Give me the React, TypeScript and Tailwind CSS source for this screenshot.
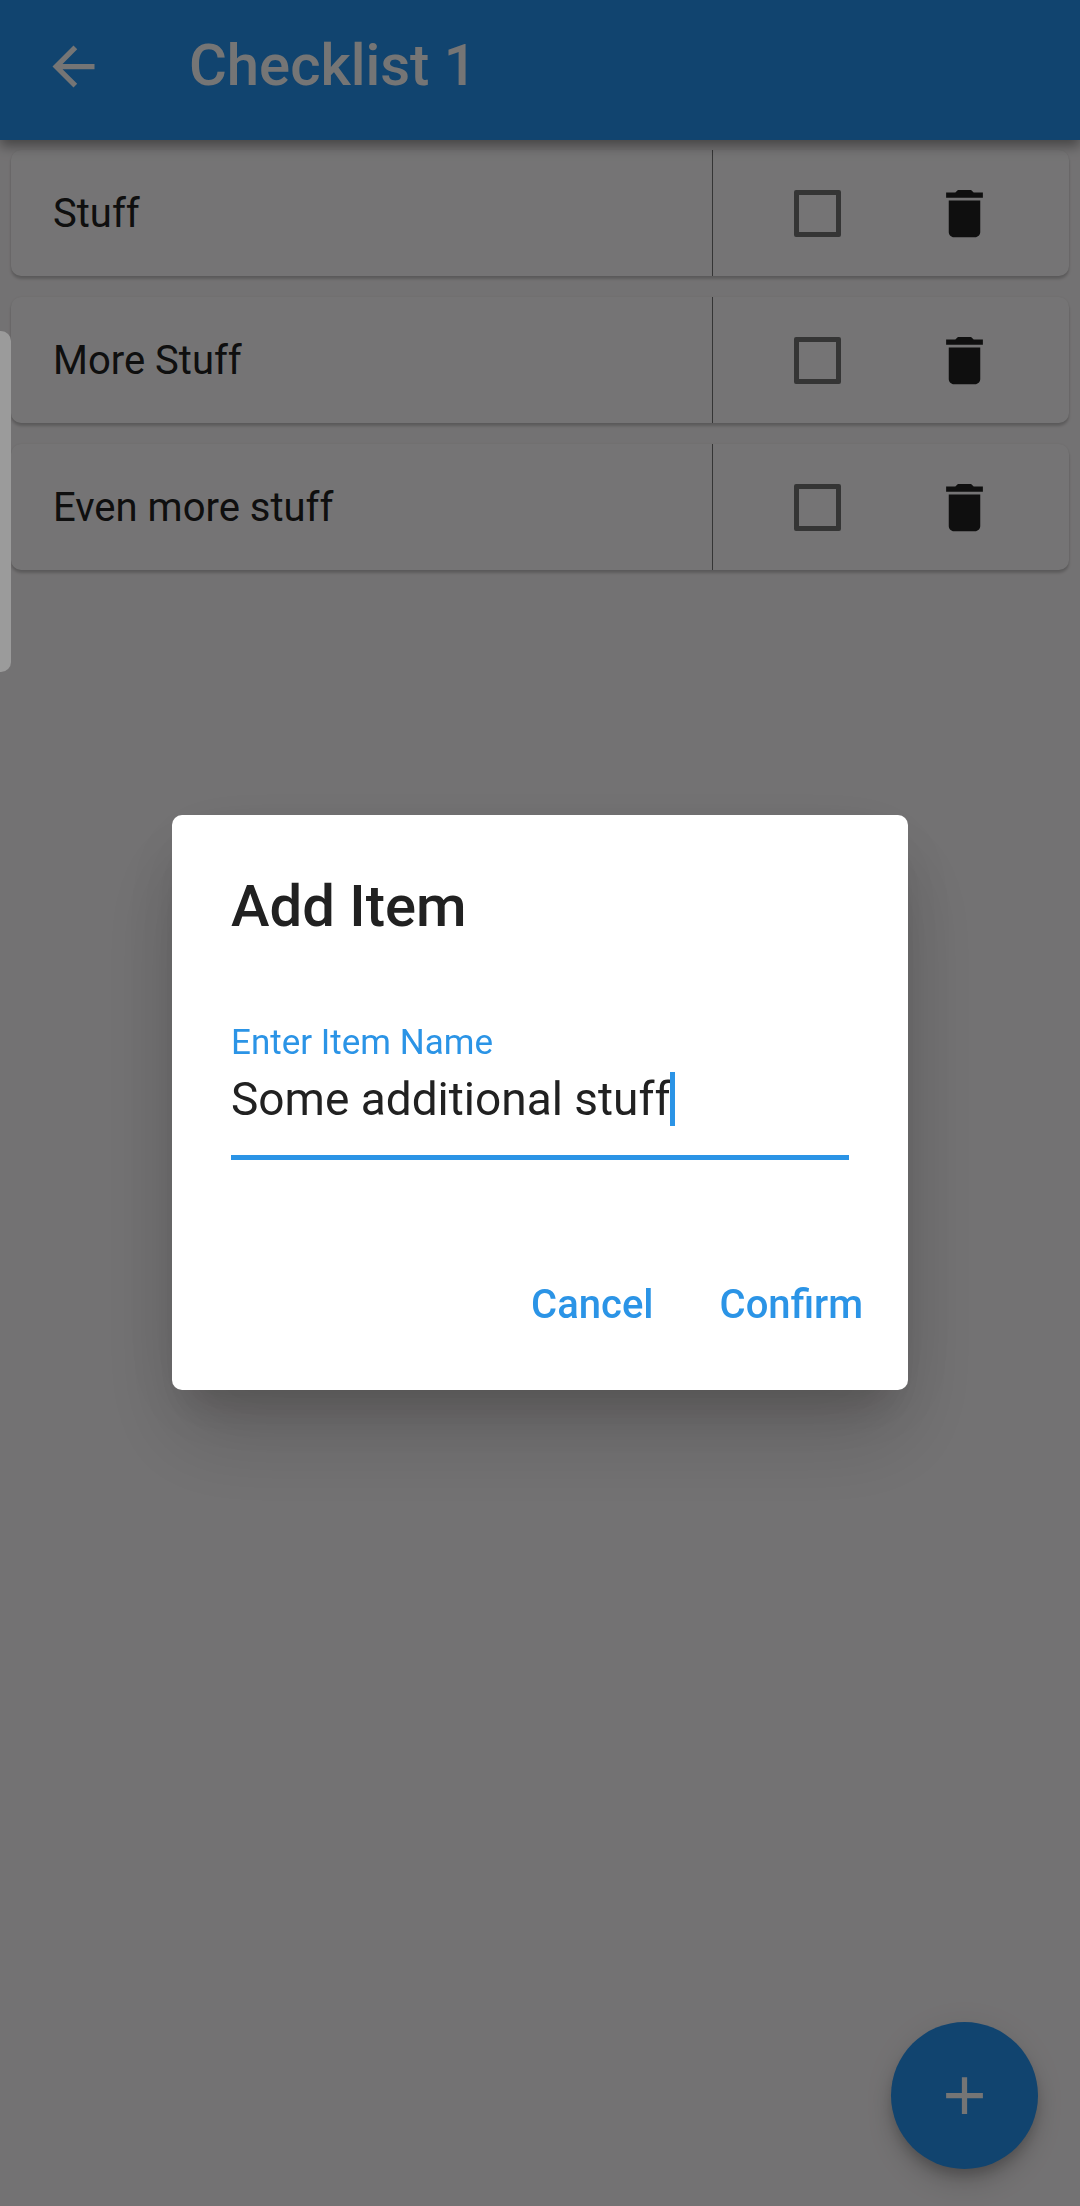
import { useState } from "react";
import { MdAdd, MdArrowBack, MdDelete } from "react-icons/md";

interface Item {
    id: number;
    name: string;
    done: boolean;
}

const initialItems: Item[] = [
    { id: 1, name: "Stuff", done: false },
    { id: 2, name: "More Stuff", done: false },
    { id: 3, name: "Even more stuff", done: false },
];

const TopBar = ({ title }: { title: string }) => (
    <header className="relative flex h-[140px] items-center bg-[#2594f1] px-[42px] pb-2 text-white shadow-[0_6px_12px_rgba(0,0,0,0.4)]">
        <button type="button" aria-label="Back" className="mr-[84px]">
            <MdArrowBack className="size-[63px]" />
        </button>
        <h1 className="pb-[2px] text-[58px] leading-[66px] font-medium">{title}</h1>
    </header>
);

interface ItemRowProps {
    item: Item;
    onToggle: (id: number) => void;
    onRemove: (id: number) => void;
}

const ItemRow = ({ item, onToggle, onRemove }: ItemRowProps) => (
    <li className="flex h-[126px] items-stretch rounded-[10px] bg-[#fefdfe] shadow-[0_3px_3px_rgba(0,0,0,0.2),0_0_2px_rgba(0,0,0,0.08)]">
        <label htmlFor={`item-${item.id}`} className="flex flex-1 items-center pt-[2px] pl-[42px] text-[40px] leading-[48px] text-[#212121]">
            {item.name}
        </label>
        <div className="grid w-[357px] shrink-0 grid-cols-2 place-items-center border-l border-[#757575] px-[31px]">
            <input
                id={`item-${item.id}`}
                type="checkbox"
                checked={item.done}
                onChange={() => onToggle(item.id)}
                className="size-[47px] appearance-none rounded-xs border-5 border-[#757575] checked:bg-[#2594f1]"
            />
            <button type="button" aria-label={`Delete ${item.name}`} onClick={() => onRemove(item.id)}>
                <MdDelete className="size-[63px] text-[#212121]" />
            </button>
        </div>
    </li>
);

interface AddItemDialogProps {
    onCancel: () => void;
    onConfirm: (name: string) => void;
}

const AddItemDialog = ({ onCancel, onConfirm }: AddItemDialogProps) => {
    const [name, setName] = useState("Some additional stuff");

    return (
        <div className="fixed inset-0 flex items-center justify-center bg-black/54 pb-[2px]">
            <form
                role="dialog"
                aria-labelledby="dialog-title"
                onSubmit={(e) => {
                    e.preventDefault();
                    onConfirm(name);
                }}
                className="w-[736px] rounded-[10px] bg-white pt-[58px] pb-[37px] shadow-[0_29px_39px_-18px_rgba(0,0,0,0.15),0_50px_90px_rgba(0,0,0,0.14),0_20px_80px_rgba(0,0,0,0.08)]"
            >
                <h2 id="dialog-title" className="px-[59px] text-[58px] leading-[66px] font-medium text-[#212121]">Add Item</h2>
                <div className="px-[59px] pt-[83px]">
                    <label htmlFor="item-name" className="block text-[35px] leading-[42px] text-[#2b94e6]">Enter Item Name</label>
                    <div className="flex items-center border-b-5 border-[#2b94e6] pt-[8px] pb-[29px]">
                        <input
                            id="item-name"
                            type="text"
                            value={name}
                            onChange={(e) => setName(e.target.value)}
                            className="field-sizing-content max-w-full text-[46px] leading-[54px] text-[#212121] caret-transparent outline-none"
                        />
                        <span className="h-[54px] w-[5px] bg-[#2b94e6]" />
                    </div>
                </div>
                <div className="flex justify-end gap-[24px] px-[24px] pt-[97px] text-[40px] leading-[48px] font-medium text-[#2b94e6]">
                    <button type="button" onClick={onCancel} className="px-[21px] py-[24px]">Cancel</button>
                    <button type="submit" className="px-[21px] py-[24px]">Confirm</button>
                </div>
            </form>
        </div>
    );
};

const App = () => {
    const [items, setItems] = useState<Item[]>(initialItems);
    const [dialogOpen, setDialogOpen] = useState(true);

    const toggleItem = (id: number) => {
        setItems((prev) => prev.map((item) => (item.id === id ? { ...item, done: !item.done } : item)));
    };

    const removeItem = (id: number) => {
        setItems((prev) => prev.filter((item) => item.id !== id));
    };

    const addItem = (name: string) => {
        if (name !== "") {
            setItems((prev) => [...prev, { id: Date.now(), name, done: false }]);
        }
        setDialogOpen(false);
    };

    return (
        <div className="min-h-screen bg-[#fbf8fa] font-[Roboto,sans-serif]">
            <TopBar title="Checklist 1" />
            <ul className="flex flex-col gap-[21px] px-[11px] pt-[10px]">
                {items.map((item) => (
                    <ItemRow key={item.id} item={item} onToggle={toggleItem} onRemove={removeItem} />
                ))}
            </ul>
            <button
                type="button"
                aria-label="Add item"
                onClick={() => setDialogOpen(true)}
                className="fixed right-[42px] bottom-[37px] flex size-[147px] items-center justify-center rounded-full bg-[#2594f1] text-white shadow-[0_8px_13px_-3px_rgba(0,0,0,0.2),0_16px_26px_rgba(0,0,0,0.14),0_3px_30px_rgba(0,0,0,0.08)]"
            >
                <MdAdd className="size-[63px]" />
            </button>
            {dialogOpen && <AddItemDialog onCancel={() => setDialogOpen(false)} onConfirm={addItem} />}
            {/* edge panel handle */}
            <div className="fixed top-[331px] left-0 h-[341px] w-[11px] rounded-r-[10px] bg-[#9b9b9b]" />
        </div>
    );
};

export default App;
